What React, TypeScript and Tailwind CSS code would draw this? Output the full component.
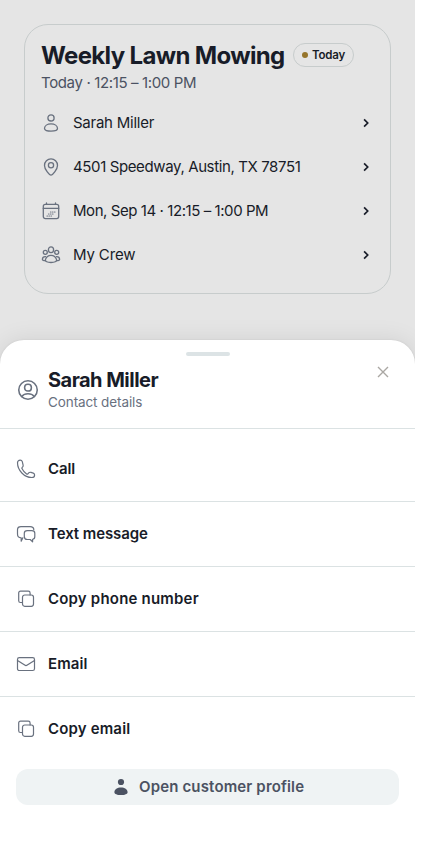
import React from "react";

type IconProps = { className?: string };

const Svg = ({ className = "h-5 w-5", children }: IconProps & { children: React.ReactNode }) => (
  <svg viewBox="0 0 20 20" fill="none" stroke="currentColor" strokeWidth="1.3" strokeLinecap="round" strokeLinejoin="round" className={`block shrink-0 ${className}`}>
    {children}
  </svg>
);

const PersonIcon = () => (
  <Svg>
    <circle cx="10" cy="4.9" r="3.1" />
    <path d="M10 10.900c3.700 0 6.500 2 6.500 4.700 0 1.700-2.800 2.600-6.500 2.600s-6.500-.9-6.500-2.600c0-2.700 2.800-4.700 6.500-4.700Z" />
  </Svg>
);

const PinIcon = () => (
  <Svg>
    <path d="M10 18.200C8.700 18.200 3.500 12.800 3.500 8.400a6.500 6.500 0 0 1 13 0c0 4.400-5.200 9.800-6.500 9.800Z" />
    <circle cx="10" cy="8.200" r="2.600" />
  </Svg>
);

const CalendarIcon = () => (
  <Svg>
    <rect x="2.300" y="3.400" width="15.400" height="14.200" rx="2" />
    <path d="M2.300 7.400h15.400M5.500 1.900v1.500M14.500 1.900v1.500" />
    <path d="M9.500 11h4.500M7.500 13h5.500M6 15h5.500" strokeWidth="1.200" strokeDasharray=".5 1.500" />
  </Svg>
);

const CrewIcon = () => (
  <Svg>
    <ellipse cx="10" cy="4.800" rx="2.600" ry="2.900" />
    <circle cx="4.300" cy="7.300" r="2" />
    <circle cx="15.700" cy="7.300" r="2" />
    <path d="M10 10.300c2.800 0 4.900 2 5.600 4.300.5 1.900-2.100 2.900-5.600 2.900s-6.100-1-5.600-2.900c.7-2.300 2.800-4.300 5.600-4.300Z" />
    <path d="M4.600 11.600c-1.900-.1-3.100 1.100-3.200 2.600 0 1 1.200 1.500 3 1.500M15.400 11.600c1.900-.1 3.100 1.100 3.200 2.600 0 1-1.200 1.500-3 1.500" />
  </Svg>
);

const ProfileIcon = () => (
  <Svg className="h-6 w-6">
    <circle cx="10" cy="10" r="7.700" />
    <rect x="7.200" y="5.200" width="5.600" height="5.700" rx="2.600" />
    <path d="M4.700 15.400c1.300-1.500 3.100-2.200 5.300-2.200s4 .7 5.300 2.200" />
  </Svg>
);

const PhoneIcon = () => (
  <Svg>
    <path d="M4.200 1.200c-1.600 0-2.700.8-2.700 2.600 0 7.600 6.800 14.700 14.300 14.700 1.800 0 2.800-1 2.800-2.600 0-1-.5-1.500-1.300-1.800l-2.300-.7c-1-.3-1.700-.2-2.300.5l-.8.900c-.4.400-.9.400-1.300.1-2-1.300-3.600-3.100-4.700-5.300-.2-.5-.1-.9.300-1.200l.5-.5c.5-.5.6-1.100.4-1.800l-.8-3.400C6 1.700 5.300 1.200 4.200 1.200Z" strokeWidth="1.200" />
  </Svg>
);

const MessagesIcon = () => (
  <Svg>
    <path d="M6.900 13.700 5.200 17.200v-3.400C2.800 13.800 1.500 12.700 1.500 10V5.700C1.500 3.500 2.700 2.600 5 2.600h9.100c2.400 0 3.700.9 3.700 3.100" strokeWidth="1.200" />
    <path d="M11.300 6.600h4.500c2 0 3 .9 3 2.700v3.300c0 1.800-.8 2.700-2.200 2.800v2.400l-2.400-2.300h-2.900c-2.100 0-3-.9-3-2.900V9.300c0-1.800 1-2.700 3-2.700Z" strokeWidth="1.200" />
  </Svg>
);

const CopyIcon = () => (
  <Svg>
    <path d="M6.300 13.500H4.500c-1.100 0-1.800-.6-1.800-1.800V4c0-1.100.7-1.800 1.800-1.800h7.800c1.200 0 1.800.7 1.800 1.800v2" strokeWidth="1.200" />
    <rect x="6.500" y="6" width="11" height="11.300" rx="2.200" strokeWidth="1.200" />
  </Svg>
);

const MailIcon = () => (
  <Svg>
    <rect x="1.500" y="3.600" width="17" height="12.900" rx="1.800" strokeWidth="1.200" />
    <path d="m1.500 6.400 7.200 4.700c.9.600 1.700.6 2.600 0l7.200-4.700" strokeWidth="1.200" />
  </Svg>
);

const ChevronIcon = () => (
  <svg viewBox="0 0 16 16" className="block h-4 w-4 shrink-0 text-[#181c28]" fill="none" stroke="currentColor" strokeWidth="1.700">
    <path d="m6.100 4.400 3.600 3.600-3.600 3.600" />
  </svg>
);

const details = [
  { icon: <PersonIcon />, label: "Sarah Miller", tracking: "tracking-[-0.25px]" },
  { icon: <PinIcon />, label: "4501 Speedway, Austin, TX 78751", tracking: "tracking-[-0.38px]" },
  { icon: <CalendarIcon />, label: "Mon, Sep 14 · 12:15 – 1:00 PM", tracking: "tracking-[-0.43px]" },
  { icon: <CrewIcon />, label: "My Crew", tracking: "tracking-[-0.15px]" },
];

const actions = [
  { icon: <PhoneIcon />, label: "Call", tracking: "tracking-[-0.1px]" },
  { icon: <MessagesIcon />, label: "Text message", tracking: "tracking-[-0.08px]" },
  { icon: <CopyIcon />, label: "Copy phone number", tracking: "tracking-[0.2px]" },
  { icon: <MailIcon />, label: "Email", tracking: "tracking-[0.1px]" },
  { icon: <CopyIcon />, label: "Copy email", tracking: "tracking-[0.16px]" },
];

export default function App() {
  return (
    <div className="h-[845px] w-full overflow-hidden bg-white font-['Inter',sans-serif] text-[#181c28]">
      <div className="flex h-full w-[415px] flex-col overflow-hidden bg-[#e5e5e5]">
        <main className="h-[340px] shrink-0 px-6 pt-6">
          <section className="h-[270px] rounded-3xl border border-[#c7cccc] px-4 pt-[14px]">
            <header>
              <div className="flex h-8 items-center gap-2">
                <h1 className="w-[244px] whitespace-nowrap pt-px text-2xl font-bold tracking-[-0.66px]">Weekly Lawn Mowing</h1>
                <span className="flex h-6 w-[61px] items-center gap-1 rounded-full border border-[#c7cccc] pl-2 text-[11.5px] font-semibold tracking-[-0.2px]">
                  <i className="h-1.5 w-1.5 rounded-full bg-[#96752b]" />
                  <span className="pt-px">Today</span>
                </span>
              </div>
              <p className="whitespace-nowrap text-[15px] leading-6 tracking-[-0.36px] text-[#4b5262]">Today · 12:15 – 1:00 PM</p>
            </header>
            <ul className="pt-[6px]">
              {details.map((item) => (
                <li key={item.label} className="flex h-11 items-center gap-3 text-[#69717f]">
                  {item.icon}
                  <span className={`flex-1 whitespace-nowrap text-[15px] leading-6 text-[#181c28] ${item.tracking}`}>{item.label}</span>
                  <ChevronIcon />
                </li>
              ))}
            </ul>
          </section>
        </main>

        <section className="flex-1 rounded-t-3xl bg-white shadow-[0_0_24px_rgba(0,0,0,0.09),0_0_2px_rgba(0,0,0,0.10)]">
          <header className="h-[89px] border-b border-[#dbe2e3] px-4 pt-3">
            <div className="mx-auto h-1 w-11 rounded-full bg-[#dce3e5]" />
            <div className="flex items-start pt-2">
              <div className="mr-2 pt-[14px] text-[#69717f]"><ProfileIcon /></div>
              <div className="flex-1">
                <h2 className="text-xl font-bold leading-8 tracking-[-0.52px]">Sarah Miller</h2>
                <p className="-mt-0.5 text-[13.5px] leading-4 tracking-[-0.1px] text-[#69717f]">Contact details</p>
              </div>
              <svg viewBox="0 0 16 16" className="mr-2 h-4 w-4 text-[#aaa7a3]" fill="none" stroke="currentColor" strokeWidth="1.400">
                <path d="m3 3 10 10M13 3 3 13" />
              </svg>
            </div>
          </header>
          <ul className="pt-2">
            {actions.map((item) => (
              <li key={item.label} className="flex h-[65px] items-center gap-3 border-b border-[#dbe2e3] px-4 text-[#69717f] last:border-transparent">
                {item.icon}
                <span className={`whitespace-nowrap text-[15px] leading-6 font-semibold text-[#181c28] ${item.tracking}`}>{item.label}</span>
              </li>
            ))}
          </ul>
          <div className="px-4 pt-[7px]">
            <button className="flex h-9 w-full items-center justify-center gap-2 rounded-xl bg-[#eff3f4] text-[15px] font-semibold text-[#4b5262]">
              <svg viewBox="0 0 20 20" className="h-5 w-5 shrink-0" fill="currentColor">
                <circle cx="10" cy="5" r="3.100" />
                <path d="M10 10.400c3.700 0 6.600 2 6.600 4.800 0 1.800-2.900 2.900-6.600 2.900s-6.600-1.100-6.600-2.900c0-2.800 2.900-4.800 6.600-4.800Z" />
              </svg>
              <span className="w-[165px] whitespace-nowrap text-left tracking-[0.15px]">Open customer profile</span>
            </button>
          </div>
        </section>
      </div>
    </div>
  );
}
